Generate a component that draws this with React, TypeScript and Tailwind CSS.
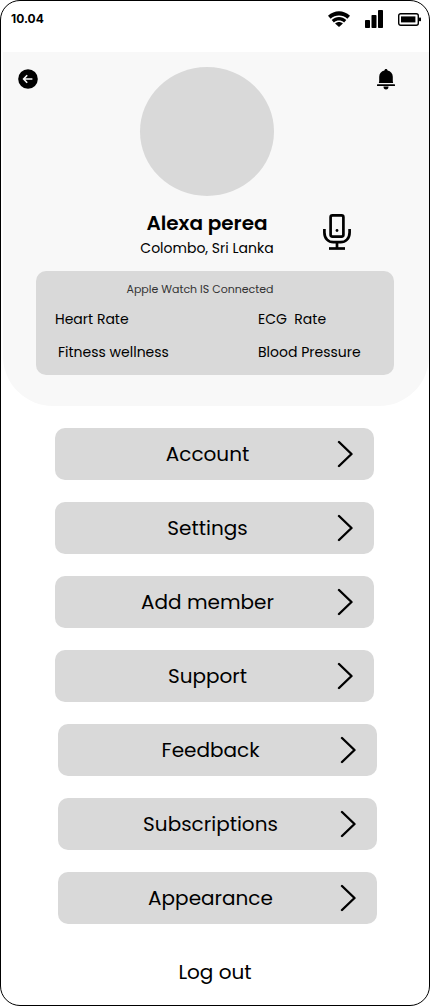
import React from "react";

function WifiIcon() {
  return (
    <svg width="22" height="16" viewBox="0 0 22 16" aria-hidden="true">
      <path d="M0 4.7C6.300-1.400 15.700-1.400 22 4.700L19.400 7.800C14.600 3.400 7.400 3.400 2.600 7.800z" />
      <path d="M3.700 8.900C7.900 5 14.100 5 18.300 8.900L16.100 11.400C13.100 8.800 8.900 8.800 5.900 11.400z" />
      <path d="M7.100 12.400C9.400 10.400 12.600 10.400 14.900 12.400L11 16z" />
    </svg>
  );
}

function SignalIcon() {
  return (
    <svg width="18" height="18" viewBox="0 0 18 18" aria-hidden="true">
      <rect x="0" y="10" width="5" height="8" rx="0.8" />
      <rect x="6.5" y="5" width="5" height="13" rx="0.8" />
      <rect x="13" y="0" width="5" height="18" rx="0.8" />
    </svg>
  );
}

function BatteryIcon() {
  return (
    <svg width="23" height="13" viewBox="0 0 23 13" aria-hidden="true">
      <rect x="0.7" y="0.7" width="19.6" height="11.6" rx="2" fill="none" stroke="black" strokeWidth="1.4" />
      <rect x="3" y="3.4" width="14.4" height="6" />
      <rect x="21" y="4.6" width="2" height="3.6" rx="0.6" />
    </svg>
  );
}

function BackIcon() {
  return (
    <svg width="20" height="20" viewBox="0 0 20 20" fill="none" aria-hidden="true">
      <circle cx="10" cy="10" r="9.8" fill="black" />
      <path d="M14.4 10H6M9.2 6.2 5.6 10l3.6 3.8" stroke="#f8f8f8" strokeWidth="1.6" />
    </svg>
  );
}

function BellIcon() {
  return (
    <svg width="18" height="21" viewBox="0 0 18 21" aria-hidden="true">
      <path d="M9 0c.9 0 1.500.6 1.600 1.500 3.100.7 5.200 3 5.200 6.200v4.600l.4 1.700H1.800l.4-1.700V7.700c0-3.200 2.100-5.500 5.200-6.200C7.500.6 8.100 0 9 0z" />
      <rect x="0" y="15.200" width="18" height="1.800" rx="0.6" />
      <path d="M6.500 17.500h5a2.500 3 0 0 1-5 0z" />
    </svg>
  );
}

function MicIcon() {
  return (
    <svg width="28" height="36" viewBox="0 0 28 36" fill="none" stroke="black" strokeWidth="2.7" aria-hidden="true">
      <rect x="7.6" y="1.4" width="12.8" height="21.2" rx="1.8" />
      <path d="M1.400 15v3.500c0 6 4 9.700 9 9.700h7.200c5 0 9-3.700 9-9.700V15" />
      <path d="M14 28v6" />
      <path d="M6 34.500h16" />
      <circle cx="14" cy="16.5" r="1.4" fill="black" stroke="none" />
    </svg>
  );
}

function ChevronIcon() {
  return (
    <svg width="16" height="28" viewBox="0 0 16 28" fill="none" stroke="black" strokeWidth="2.4" strokeLinecap="round" strokeLinejoin="round" aria-hidden="true">
      <path d="M2 2l12.500 12L2 26" />
    </svg>
  );
}

function MenuItem({ label }: { label: string }) {
  return (
    <li>
      <button type="button" className="flex h-13 w-full items-center rounded-[10px] bg-[#d9d9d9] pr-[21px] pl-[23px]">
        <span className="flex-1 text-center text-xl leading-8">{label}</span>
        <ChevronIcon />
      </button>
    </li>
  );
}

const primaryItems = ["Account", "Settings", "Add member", "Support"];
const secondaryItems = ["Feedback", "Subscriptions", "Appearance"];

export default function App() {
  return (
    <div className="flex min-h-screen flex-col rounded-[20px] border border-black bg-white font-[Poppins,Inter,sans-serif] text-black">
      <div className="flex h-[51px] items-start justify-between pt-2 pr-2 pl-[10px]">
        <span className="font-[Inter,sans-serif] text-xs leading-5 font-bold">10.04</span>
        <div className="flex h-5 items-center gap-[15px]">
          <WifiIcon />
          <SignalIcon />
          <BatteryIcon />
        </div>
      </div>

      <header className="ml-0.5 rounded-b-[50px] bg-[#f8f8f8] pt-[15px] pb-[31px]">
        <div className="grid grid-cols-[1fr_134px_1fr] pr-[33px] pl-[15px]">
          <button type="button" aria-label="Back" className="mt-0.5 h-5 w-5 justify-self-start">
            <BackIcon />
          </button>
          <div className="h-[129px] rounded-[50%] bg-[#d9d9d9]" />
          <button type="button" aria-label="Notifications" className="mt-0.5 mr-px h-5 justify-self-end">
            <BellIcon />
          </button>
        </div>

        <div className="mt-3 grid grid-cols-[1fr_134px_1fr] pr-[33px] pl-[15px]">
          <div className="col-start-2 flex flex-col items-center whitespace-nowrap">
            <h1 className="text-xl leading-[30px] font-semibold">Alexa perea</h1>
            <p className="text-sm leading-5">Colombo, Sri Lanka</p>
          </div>
          <button type="button" aria-label="Voice" className="mt-1.5 ml-[49px] h-9 justify-self-start">
            <MicIcon />
          </button>
        </div>

        <section className="mt-[13px] mr-[35px] ml-[33px] rounded-[10px] bg-[#d9d9d9] pt-2 pb-3">
          <p className="pr-[30px] text-center text-[11px] leading-5 text-[#333333]">Apple Watch IS Connected</p>
          <div className="mt-[9px] grid grid-cols-[203px_1fr] gap-y-[11px] pl-[19px] text-sm leading-[22px]">
            <span>Heart Rate</span>
            <span className="whitespace-pre">ECG  Rate</span>
            <span className="pl-[3px]">Fitness wellness</span>
            <span>Blood Pressure</span>
          </div>
        </section>
      </header>

      <nav className="mt-[22px] flex flex-col gap-[22px]">
        <ul className="mr-[55px] ml-[54px] flex flex-col gap-[22px]">
          {primaryItems.map((label) => (
            <MenuItem key={label} label={label} />
          ))}
        </ul>
        <ul className="mr-[52px] ml-[57px] flex flex-col gap-[22px]">
          {secondaryItems.map((label) => (
            <MenuItem key={label} label={label} />
          ))}
        </ul>
      </nav>

      <button type="button" className="mt-8 mb-4 self-center text-xl leading-8">
        Log out
      </button>
    </div>
  );
}
